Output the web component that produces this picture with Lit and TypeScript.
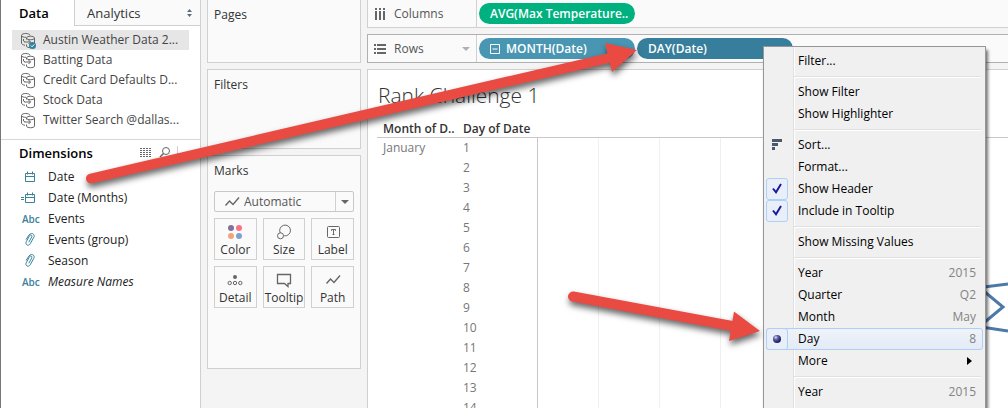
import { LitElement, html, svg, css } from "lit";
import { customElement, state } from "lit/decorators.js";
import { classMap } from "lit/directives/class-map.js";

const SOURCES = [
  "Austin Weather Data 2...",
  "Batting Data",
  "Credit Card Defaults D...",
  "Stock Data",
  "Twitter Search @dallas...",
];

type Field = { icon: string; name: string; italic?: boolean };
const FIELDS: Field[] = [
  { icon: "date", name: "Date" },
  { icon: "calc", name: "Date (Months)" },
  { icon: "abc", name: "Events" },
  { icon: "clip", name: "Events (group)" },
  { icon: "clip", name: "Season" },
  { icon: "abc", name: "Measure Names", italic: true },
];

const MARKS = ["Color", "Size", "Label", "Detail", "Tooltip", "Path"];

type Item = { label: string; hint?: string; mark?: string; more?: boolean };
const MENU: Item[][] = [
  [{ label: "Filter..." }],
  [{ label: "Show Filter" }, { label: "Show Highlighter" }],
  [
    { label: "Sort...", mark: "sort" },
    { label: "Format..." },
    { label: "Show Header", mark: "check" },
    { label: "Include in Tooltip", mark: "check" },
  ],
  [{ label: "Show Missing Values" }],
  [
    { label: "Year", hint: "2015" },
    { label: "Quarter", hint: "Q2" },
    { label: "Month", hint: "May" },
    { label: "Day", hint: "8", mark: "radio" },
    { label: "More", more: true },
  ],
  [{ label: "Year", hint: "2015" }],
];

const calendar = svg`
  <path d="M7.5 4.5h9v8h-9z M7.5 7.5h9 M9.5 2.5v3 M14.5 2.5v3" />`;

const fieldIcon = (name: string) => {
  if (name === "abc") return html`<span class="abc">Abc</span>`;
  return html`<svg class="field-icon" width="24" height="15" viewBox="0 0 24 15">
    ${name === "clip"
      ? svg`<path d="M8 7.500l3-4.500c2-3 6.500-1 4.800 2.300l-3.600 6.500c-1.700 2.800-5.400 1-4-2l3.300-6c1-1.600 3-.5 2.300 1l-3 5.500" />`
      : calendar}
    ${name === "calc" ? svg`<path d="M3 7.5h3 M3 9.5h3" />` : ""}
  </svg>`;
};

const database = (selected: boolean) => html`
  <svg class="db" width="17" height="17" viewBox="0 0 17 17">
    <path d="M10 3.500c0-2.700-8.500-2.700-8.500 0v7.500c0 1 1.500 2 3.500 2.300 M1.500 3.500c0 1.300 2.500 2 4.500 1.800 M3.500 7v2l1.500 1" />
    <path d="M6.500 6c0-2.300 8-2.300 8 0s-8 2.300-8 0v1.500 M14.500 6v8c0 2.300-8 2.300-8 0v-1.500 M4.500 10h6 M8.500 8l2 2-2 2" />
    ${selected
      ? svg`<circle class="badge" cx="12.500" cy="13.500" r="3.500" /><path class="tick" d="M10.800 13.500l1.300 1.300 2.200-2.500" />`
      : ""}
  </svg>`;

const zigzag = svg`<path stroke-width="1.400" d="M1.500 9.500l4-4.500 3.500 3.500 6-7" />`;

const markIcon = (name: string) => {
  const shapes: Record<string, unknown> = {
    Color: svg`
      <circle class="fill" cx="4" cy="4" r="3" fill="#84709b" /><circle class="fill" cx="12" cy="4" r="3" fill="#fc7182" />
      <circle class="fill" cx="4" cy="12" r="3" fill="#f2a574" /><circle class="fill" cx="12" cy="12" r="3" fill="#80a1cb" />`,
    Size: svg`<path d="M4.300 9A5.400 5.400 0 1 1 8.200 11.800" /><circle cx="4.500" cy="11.800" r="3" />`,
    Label: svg`<rect x="2.500" y="2.500" width="12" height="11" rx="1" /><path d="M6.500 6.800v-1.300h4v1.300 M8.500 5.500v5.500 M7.500 10.500h2" />`,
    Detail: svg`<circle class="fill" cx="8" cy="5" r="2" fill="#666" /><circle cx="2.700" cy="11" r="1.700" /><circle cx="8" cy="11" r="1.700" /><circle cx="13.300" cy="11" r="1.700" />`,
    Tooltip: svg`<path stroke-width="1.300" d="M1.500 2.500h13v9h-2.500v3l-3.500-3h-7z" />`,
    Path: svg`<g transform="translate(0 2)">${zigzag}</g>`,
  };
  return html`<svg class="mark-icon" width="16" height="16" viewBox="0 0 16 16">${shapes[name]}</svg>`;
};

const menuIcon = (mark?: string) => {
  if (mark === "check")
    return html`<svg width="20" height="20" viewBox="0 0 20 20"><path d="M6 9.500l3 3.800 5-8.300" fill="none" stroke="#1a1a9e" stroke-width="2" /></svg>`;
  if (mark === "sort")
    return html`<svg width="20" height="20" viewBox="0 0 20 20" fill="#4a5870"><path d="M5 4h10v3H5z M5 8h6v3H5z M5 12h3v3H5z" /></svg>`;
  if (mark === "radio")
    return html`<svg width="20" height="20" viewBox="0 0 20 20">
      <defs><radialGradient id="ball" cx=".35" cy=".3" r=".7"><stop offset="0" stop-color="#dcdcf4" /><stop offset=".4" stop-color="#5c5ca8" /><stop offset="1" stop-color="#17175c" /></radialGradient></defs>
      <circle cx="10" cy="10" r="4" fill="url(#ball)" /></svg>`;
  return "";
};

@customElement("context-menu")
export class ContextMenu extends LitElement {
  static styles = css`
    :host {
      display: block;
      box-sizing: border-box;
      padding: 3px 2px 24px;
      border: 1px solid #979797;
      background: linear-gradient(to right, #f0f0f0 29px, #e0e0e0 29px, #e0e0e0 30px, #fff 30px, #fff 31px, #f0f0f0 31px);
      box-shadow: 2px 4px 3px rgba(0, 0, 0, 0.55);
      font: 12px/22px "Open Sans", sans-serif;
      color: #000;
    }
    .item {
      display: flex;
      align-items: center;
      width: 100%;
      height: 22px;
      padding: 0 6px 0 0;
      border: 1px solid transparent;
      border-radius: 3px;
      background: none;
      font: inherit;
      color: inherit;
      text-align: left;
    }
    .chosen {
      border-color: #aecff7;
      background: linear-gradient(#eff3f9, #e4ebf6);
    }
    .mark {
      box-sizing: border-box;
      width: 22px;
      height: 22px;
      margin-left: -1px;
      border: 1px solid transparent;
      border-radius: 3px;
    }
    .mark svg {
      display: block;
    }
    .boxed {
      border-color: #aecff7;
      background: #e9eff8;
    }
    .label {
      flex: 1;
      padding-left: 10px;
    }
    .hint {
      color: #838383;
    }
    .more {
      margin-right: 4px;
      border: 4px solid transparent;
      border-left: 5px solid #000;
      border-right: 0;
    }
    .rule {
      height: 1px;
      margin: 4px 2px 3px 28px;
      border: 0;
      border-top: 1px solid #e0e0e0;
      background: #fff;
    }
  `;

  render() {
    return html`<div role="menu">
      ${MENU.map(
        (group, i) => html`
          ${i ? html`<hr class="rule" />` : ""}
          ${group.map(
            (item) => html`<button role="menuitem" class=${classMap({ item: true, chosen: item.mark === "radio" })}>
              <span class=${classMap({ mark: true, boxed: item.mark === "check" || item.mark === "radio" })}>${menuIcon(item.mark)}</span>
              <span class="label">${item.label}</span>
              ${item.hint ? html`<span class="hint">${item.hint}</span>` : ""}
              ${item.more ? html`<span class="more"></span>` : ""}
            </button>`
          )}
        `
      )}
    </div>`;
  }
}

@customElement("app-root")
export class AppRoot extends LitElement {
  @state() private source = 0;

  static styles = css`
    :host {
      display: block;
      font: 13px/20px "Open Sans", sans-serif;
      color: #333;
    }
    * {
      box-sizing: border-box;
    }
    button,
    select {
      margin: 0;
      padding: 0;
      border: 0;
      background: none;
      font: inherit;
      color: inherit;
      text-align: left;
    }
    h1,
    h2,
    ul {
      margin: 0;
      padding: 0;
      list-style: none;
      font-size: 13px;
    }
    svg {
      flex: none;
    }
    .app {
      position: relative;
      display: grid;
      grid-template-columns: 201px 160px minmax(0, 1fr);
      height: 100vh;
      overflow: hidden;
      background: #f4f4f4;
    }
    .side {
      border-left: 1px solid #777;
      border-right: 1px solid #d0d0d0;
      background: #fff;
    }
    .tabs {
      display: flex;
      height: 26px;
    }
    .tab {
      display: flex;
      align-items: center;
      width: 73px;
      padding-left: 18px;
      font-weight: 600;
      color: #000;
    }
    .tab-idle {
      flex: 1;
      justify-content: space-between;
      padding: 0 7px 0 12px;
      border: solid #d0d0d0;
      border-width: 0 0 1px 1px;
      background: #fafafa;
      font-weight: 400;
      color: #333;
    }
    .sources {
      padding: 4px 11px 9px;
      border-bottom: 1px solid #d8d8d8;
      font-size: 12px;
      color: #444;
    }
    .source {
      display: flex;
      align-items: center;
      gap: 6px;
      width: 100%;
      height: 20px;
      padding-left: 8px;
      white-space: nowrap;
    }
    .picked {
      background: #e6e6e6;
    }
    .db {
      fill: none;
      stroke: #666;
    }
    .badge {
      fill: #33819f;
      stroke: none;
    }
    .tick {
      stroke: #fff;
    }
    .heading {
      display: flex;
      align-items: center;
      height: 26px;
      padding: 0 22px 0 18px;
      color: #000;
    }
    .heading h2 {
      flex: 1;
      font-weight: 600;
    }
    .heading svg {
      fill: none;
      stroke: #666;
    }
    .field {
      display: flex;
      align-items: center;
      gap: 6px;
      width: 100%;
      height: 21px;
      padding-left: 17px;
      font-size: 12px;
      color: #222;
    }
    .italic {
      font-style: italic;
    }
    .field-icon {
      fill: none;
      stroke: #3a819c;
    }
    .abc {
      width: 24px;
      padding-left: 4px;
      font-size: 10px;
      font-style: normal;
      font-weight: 600;
      color: #3a819c;
    }
    .cards {
      display: flex;
      flex-direction: column;
      gap: 6px;
      padding-left: 6px;
    }
    .card {
      height: 80px;
      padding: 5px 6px;
      border: 1px solid #d0d0d0;
      background: #fafafa;
      font-size: 12px;
    }
    .card h2 {
      font-size: 12px;
      font-weight: 400;
    }
    .pages {
      height: 63px;
      border-top: 0;
    }
    .marks {
      height: 214px;
    }
    .type {
      display: flex;
      align-items: center;
      height: 21px;
      margin: 10px 0 6px;
      padding-left: 9px;
      border: 1px solid #c8c8c8;
      border-radius: 2px;
    }
    .type svg,
    .mark-icon {
      fill: none;
      stroke: #666;
      overflow: visible;
    }
    .mark-icon .fill {
      stroke: none;
    }
    .type select {
      flex: 1;
      appearance: none;
      padding-left: 4px;
      color: #555;
    }
    .caret {
      width: 18px;
      height: 19px;
      padding: 8px 5px;
      border-left: 1px solid #d0d0d0;
    }
    .down {
      display: block;
      border: 4px solid transparent;
      border-top-color: #666;
      border-bottom: 0;
    }
    .grid {
      display: grid;
      grid-template-columns: repeat(3, minmax(0, 1fr));
      gap: 6px;
    }
    .mark-button {
      display: flex;
      flex-direction: column;
      align-items: center;
      height: 42px;
      padding-top: 5px;
      border: 1px solid #d0d0d0;
      white-space: nowrap;
    }
    .main {
      display: flex;
      flex-direction: column;
      gap: 6px;
      padding-left: 6px;
    }
    .shelf {
      display: flex;
      align-items: center;
      gap: 2px;
      height: 28px;
      border: 1px solid #d0d0d0;
      border-width: 0 0 1px 1px;
      background: #fafafa;
    }
    .rows {
      height: 29px;
      border-color: #b0b0b0;
      border-top-width: 1px;
    }
    .shelf-name {
      display: flex;
      align-items: center;
      align-self: stretch;
      gap: 8px;
      width: 109px;
      padding: 0 6px;
      border-right: 1px solid #d0d0d0;
      font-size: 12px;
      color: #555;
    }
    .shelf-name span:first-of-type {
      flex: 1;
    }
    .rows .down {
      border-top-color: #b0b0b0;
    }
    .pill {
      display: flex;
      align-items: center;
      gap: 6px;
      width: 156px;
      height: 21px;
      padding: 0 11px;
      border-radius: 11px;
      background: #4996b2;
      font-size: 12px;
      font-weight: 600;
      color: #fff;
      white-space: nowrap;
    }
    .green {
      background: #00b180;
    }
    .dark {
      background: #367e9b;
    }
    .view {
      flex: 1;
      min-height: 0;
      overflow: hidden;
      padding: 9px 0 0 9px;
      border: solid #d0d0d0;
      border-width: 1px 0 0 1px;
      background: #fff;
    }
    .title {
      padding-left: 1px;
      font-size: 21px;
      line-height: 32px;
      font-weight: 300;
    }
    .data {
      width: 100%;
      margin-top: 9px;
      border-collapse: separate;
      border-spacing: 0;
      table-layout: fixed;
      font-size: 12px;
    }
    .data th,
    .data td {
      height: 20px;
      padding: 0 0 0 6px;
      font-weight: 400;
      line-height: 18px;
      text-align: left;
      color: #777;
      white-space: nowrap;
    }
    .data thead th {
      height: 18px;
      border-bottom: 1px solid #c8c8c8;
      line-height: 17px;
      font-weight: 600;
      color: #333;
    }
    .col {
      width: 80px;
    }
    .data .plot {
      padding: 0;
      border-left: 1px solid #c8c8c8;
      background: repeating-linear-gradient(to right, #fff 0, #fff 60px, #f0f0f0 60px, #f0f0f0 61px);
      vertical-align: top;
    }
    .plot svg {
      display: block;
      fill: none;
      stroke: #4e79a7;
      stroke-width: 3;
    }
    .menu {
      position: absolute;
      top: 46px;
      left: 763px;
      width: 223px;
    }
    .arrows {
      position: absolute;
      top: 0;
      left: 0;
      pointer-events: none;
      filter: drop-shadow(1px 4px 3px rgba(0, 0, 0, 0.6));
    }
  `;

  private renderSide() {
    return html`<aside class="side">
      <div class="tabs">
        <button class="tab">Data</button>
        <button class="tab tab-idle">
          Analytics
          <svg width="7" height="8" viewBox="0 0 7 8" fill="#5f6c80"><path d="M1 3l2.500-3L6 3z M1 5h5L3.500 8z" /></svg>
        </button>
      </div>
      <ul class="sources">
        ${SOURCES.map(
          (name, i) => html`<li>
            <button class=${classMap({ source: true, picked: i === this.source })} @click=${() => (this.source = i)}>
              ${database(i === this.source)}<span>${name}</span>
            </button>
          </li>`
        )}
      </ul>
      <div class="heading">
        <h2>Dimensions</h2>
        <svg width="38" height="14" viewBox="0 0 38 14">
          <path d="M0 2.500h12 M0 4.500h12 M0 6.500h12 M0 8.500h12 M0 10.500h12" stroke-dasharray="2 1" />
          <circle cx="26" cy="5" r="3.500" /><path d="M23.500 7.500l-3.500 3.500" stroke-width="1.500" />
          <path d="M37.500 0v11" stroke="#d0d0d0" />
        </svg>
      </div>
      <ul>
        ${FIELDS.map(
          (f) => html`<li><button class=${classMap({ field: true, italic: !!f.italic })}>${fieldIcon(f.icon)}<span>${f.name}</span></button></li>`
        )}
      </ul>
    </aside>`;
  }

  private renderCards() {
    return html`<div class="cards">
      <section class="card pages"><h2>Pages</h2></section>
      <section class="card"><h2>Filters</h2></section>
      <section class="card marks">
        <h2>Marks</h2>
        <div class="type">
          <svg width="16" height="12" viewBox="0 0 16 12">${zigzag}</svg>
          <select aria-label="Mark type"><option>Automatic</option></select>
          <span class="caret"><span class="down"></span></span>
        </div>
        <div class="grid">
          ${MARKS.map((m) => html`<button class="mark-button">${markIcon(m)}<span>${m}</span></button>`)}
        </div>
      </section>
    </div>`;
  }

  private renderMain() {
    const days = Array.from({ length: 14 }, (_, i) => i + 1);
    return html`<main class="main">
      <div class="shelf">
        <div class="shelf-name">
          <svg width="12" height="12" viewBox="0 0 12 12" fill="#666"><path d="M1 0h2v2H1z M5 0h2v2H5z M9 0h2v2H9z M1 3h2v9H1z M5 3h2v9H5z M9 3h2v9H9z" /></svg>
          <span>Columns</span>
        </div>
        <button class="pill green">AVG(Max Temperature..</button>
      </div>
      <div class="shelf rows">
        <div class="shelf-name">
          <svg width="12" height="12" viewBox="0 0 12 12" fill="#666"><path d="M0 1h2v2H0z M0 5h2v2H0z M0 9h2v2H0z M3 1h9v2H3z M3 5h9v2H3z M3 9h9v2H3z" /></svg>
          <span>Rows</span>
          <span class="down"></span>
        </div>
        <button class="pill">
          <svg width="10" height="10" viewBox="0 0 10 10" fill="none" stroke="#fff"><path d="M.5.5h9v9h-9z M2.500 5h5" /></svg>
          MONTH(Date)
        </button>
        <button class="pill dark">DAY(Date)</button>
      </div>
      <section class="view">
        <h1 class="title">Rank Challenge 1</h1>
        <table class="data">
          <colgroup><col class="col" /><col class="col" /><col /></colgroup>
          <thead>
            <tr><th>Month of D..</th><th>Day of Date</th><th></th></tr>
          </thead>
          <tbody>
            ${days.map(
              (d) => html`<tr>
                <td>${d === 1 ? "January" : ""}</td>
                <td>${d}</td>
                ${d === 1
                  ? html`<td class="plot" rowspan=${days.length}>
                      <svg width="470" height="270" viewBox="0 0 470 270">
                        <path d="M430 151l40-5 M430 140l35 29-35 29 M430 187l40 6" />
                      </svg>
                    </td>`
                  : ""}
              </tr>`
            )}
          </tbody>
        </table>
      </section>
    </main>`;
  }

  render() {
    return html`<div class="app">
      ${this.renderSide()} ${this.renderCards()} ${this.renderMain()}
      <context-menu class="menu"></context-menu>
      <svg class="arrows" width="1008" height="408" viewBox="0 0 1008 408" fill="#e94b43" stroke="#e94b43">
        <path d="M91 178.500L609 58 M573 296.500L732 326" stroke-width="10" stroke-linecap="round" />
        <path d="M605 43l32 7-25 22z M734 311.500l26 19.500-31 10z" stroke="none" />
      </svg>
    </div>`;
  }
}
